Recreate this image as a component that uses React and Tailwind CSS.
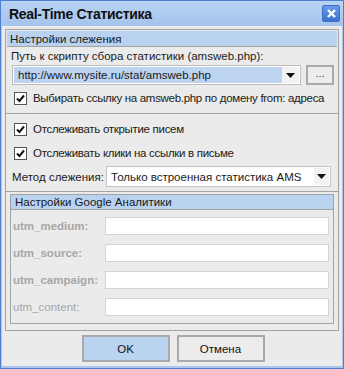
import React from "react";

const font = { fontFamily: '"Liberation Sans", Arial, sans-serif' };

function Check() {
  return (
    <span className="w-[13px] h-[13px] shrink-0 border border-[#555] bg-white flex items-center justify-center">
      <svg width="9" height="9" viewBox="0 0 9 9">
        <path d="M1 4.5 L3.5 7 L8 1.5" fill="none" stroke="#111" strokeWidth="2" />
      </svg>
    </span>
  );
}

function Arrow() {
  return (
    <svg width="9" height="5" viewBox="0 0 9 5">
      <path d="M0 0 H9 L4.5 5 Z" fill="#111" />
    </svg>
  );
}

function CheckRow({ label }) {
  return (
    <div className="h-[16px] flex items-center gap-[6px] pl-[4px] whitespace-nowrap">
      <Check />
      <span className="tracking-[-0.3px]">{label}</span>
    </div>
  );
}

function UtmRow({ label, bold }) {
  return (
    <div className="h-[18px] flex items-center">
      <span className={`w-[94px] shrink-0 pl-[2px] whitespace-nowrap text-[#a6a6a6] ${bold ? "font-bold" : ""}`}>{label}</span>
      <div className="flex-1 h-full bg-white border border-[#d4d4d4]" />
    </div>
  );
}

export default function App() {
  return (
    <div style={font} className="w-[344px] h-[369px] border border-[#4f80cf] bg-[#a9c7ee] flex flex-col text-[11.5px] leading-[14px] text-[#1a1a1a]">
      {/* Title bar */}
      <div className="h-[25px] flex items-center justify-between pl-[8px] pr-[3px] bg-gradient-to-b from-[#b8d3f4] to-[#a5c4ec]">
        <span className="text-[14px] tracking-[-0.3px] font-bold text-[#111] whitespace-nowrap">Real-Time Статистика</span>
        <div className="w-[18px] h-[17px] rounded-[2px] border border-[#3f6fc0] bg-gradient-to-b from-[#6a9be6] to-[#3c72cf] flex items-center justify-center">
          <svg width="9" height="9" viewBox="0 0 9 9">
            <path d="M1 1 L8 8 M8 1 L1 8" stroke="white" strokeWidth="2.4" />
          </svg>
        </div>
      </div>

      {/* Body */}
      <div className="flex-1 mx-[1px] mb-[2px] bg-[#ebebeb] flex flex-col px-[3px] pt-[3px]">
        <div className="border border-[#a3a3a3] flex flex-col">
          {/* Section 1 */}
          <div className="h-[16px] bg-[#b9d2f0] border-b border-[#a3a3a3] mx-[1px] mt-[1px] pl-[3px] flex items-center whitespace-nowrap">
            Настройки слежения
          </div>
          <div className="flex flex-col pt-[2px] pb-[7px] px-[4px]">
            <div className="h-[14px] pl-[1px] whitespace-nowrap">Путь к скрипту сбора статистики (amsweb.php):</div>
            <div className="mt-[2px] flex items-center gap-[5px] pl-[2px]">
              <div className="w-[289px] h-[20px] border border-[#bcbcbc] bg-white flex p-[1px]">
                <div className="flex-1 bg-[#bcd4f1] flex items-center pl-[4px] whitespace-nowrap">http://www.mysite.ru/stat/amsweb.php</div>
                <div className="w-[17px] flex items-center justify-center bg-[#f2f2f2]">
                  <Arrow />
                </div>
              </div>
              <div className="w-[28px] h-[20px] border-2 border-[#a9a9a9] bg-[#ececec] flex items-center justify-center text-[11px] pb-[4px] text-[#444]">
                ...
              </div>
            </div>
            <div className="mt-[5px]">
              <CheckRow label="Выбирать ссылку на amsweb.php по домену from: адреса" />
            </div>
          </div>

          {/* Section 2 */}
          <div className="border-t border-[#a3a3a3] flex flex-col pt-[7px] pb-[4px] px-[4px]">
            <CheckRow label="Отслеживать открытие писем" />
            <div className="mt-[8px]">
              <CheckRow label="Отслеживать клики на ссылки в письме" />
            </div>
            <div className="mt-[5px] flex items-center pl-[2px]">
              <span className="w-[94px] shrink-0 whitespace-nowrap">Метод слежения:</span>
              <div className="flex-1 h-[21px] border border-[#c4c4c4] bg-white flex p-[1px] mr-[3px]">
                <div className="flex-1 flex items-center pl-[3px] whitespace-nowrap">Только встроенная статистика AMS</div>
                <div className="w-[15px] flex items-center justify-center bg-[#f2f2f2]">
                  <Arrow />
                </div>
              </div>
            </div>
          </div>

          {/* Google box */}
          <div className="border-t border-[#a3a3a3] pt-[2px] px-[4px] pb-[6px]">
            <div className="border border-[#a3a3a3] flex flex-col">
              <div className="h-[15px] bg-[#b9d2f0] border-b border-[#a3a3a3] pl-[4px] flex items-center whitespace-nowrap">
                Настройки Google Аналитики
              </div>
              <div className="flex flex-col gap-[9px] pt-[7px] pb-[7px] pr-[4px]">
                <UtmRow label="utm_medium:" bold />
                <UtmRow label="utm_source:" bold />
                <UtmRow label="utm_campaign:" bold />
                <UtmRow label="utm_content:" />
              </div>
            </div>
          </div>
        </div>

        {/* Buttons */}
        <div className="mt-[4px] flex justify-center gap-[7px] pl-[2px]">
          <button className="w-[88px] h-[27px] border-2 border-[#a9a9a9] bg-[#b9d3f1] text-[#111]">OK</button>
          <button className="w-[88px] h-[27px] border-2 border-[#a9a9a9] bg-[#ececec] text-[#111]">Отмена</button>
        </div>
      </div>
    </div>
  );
}
